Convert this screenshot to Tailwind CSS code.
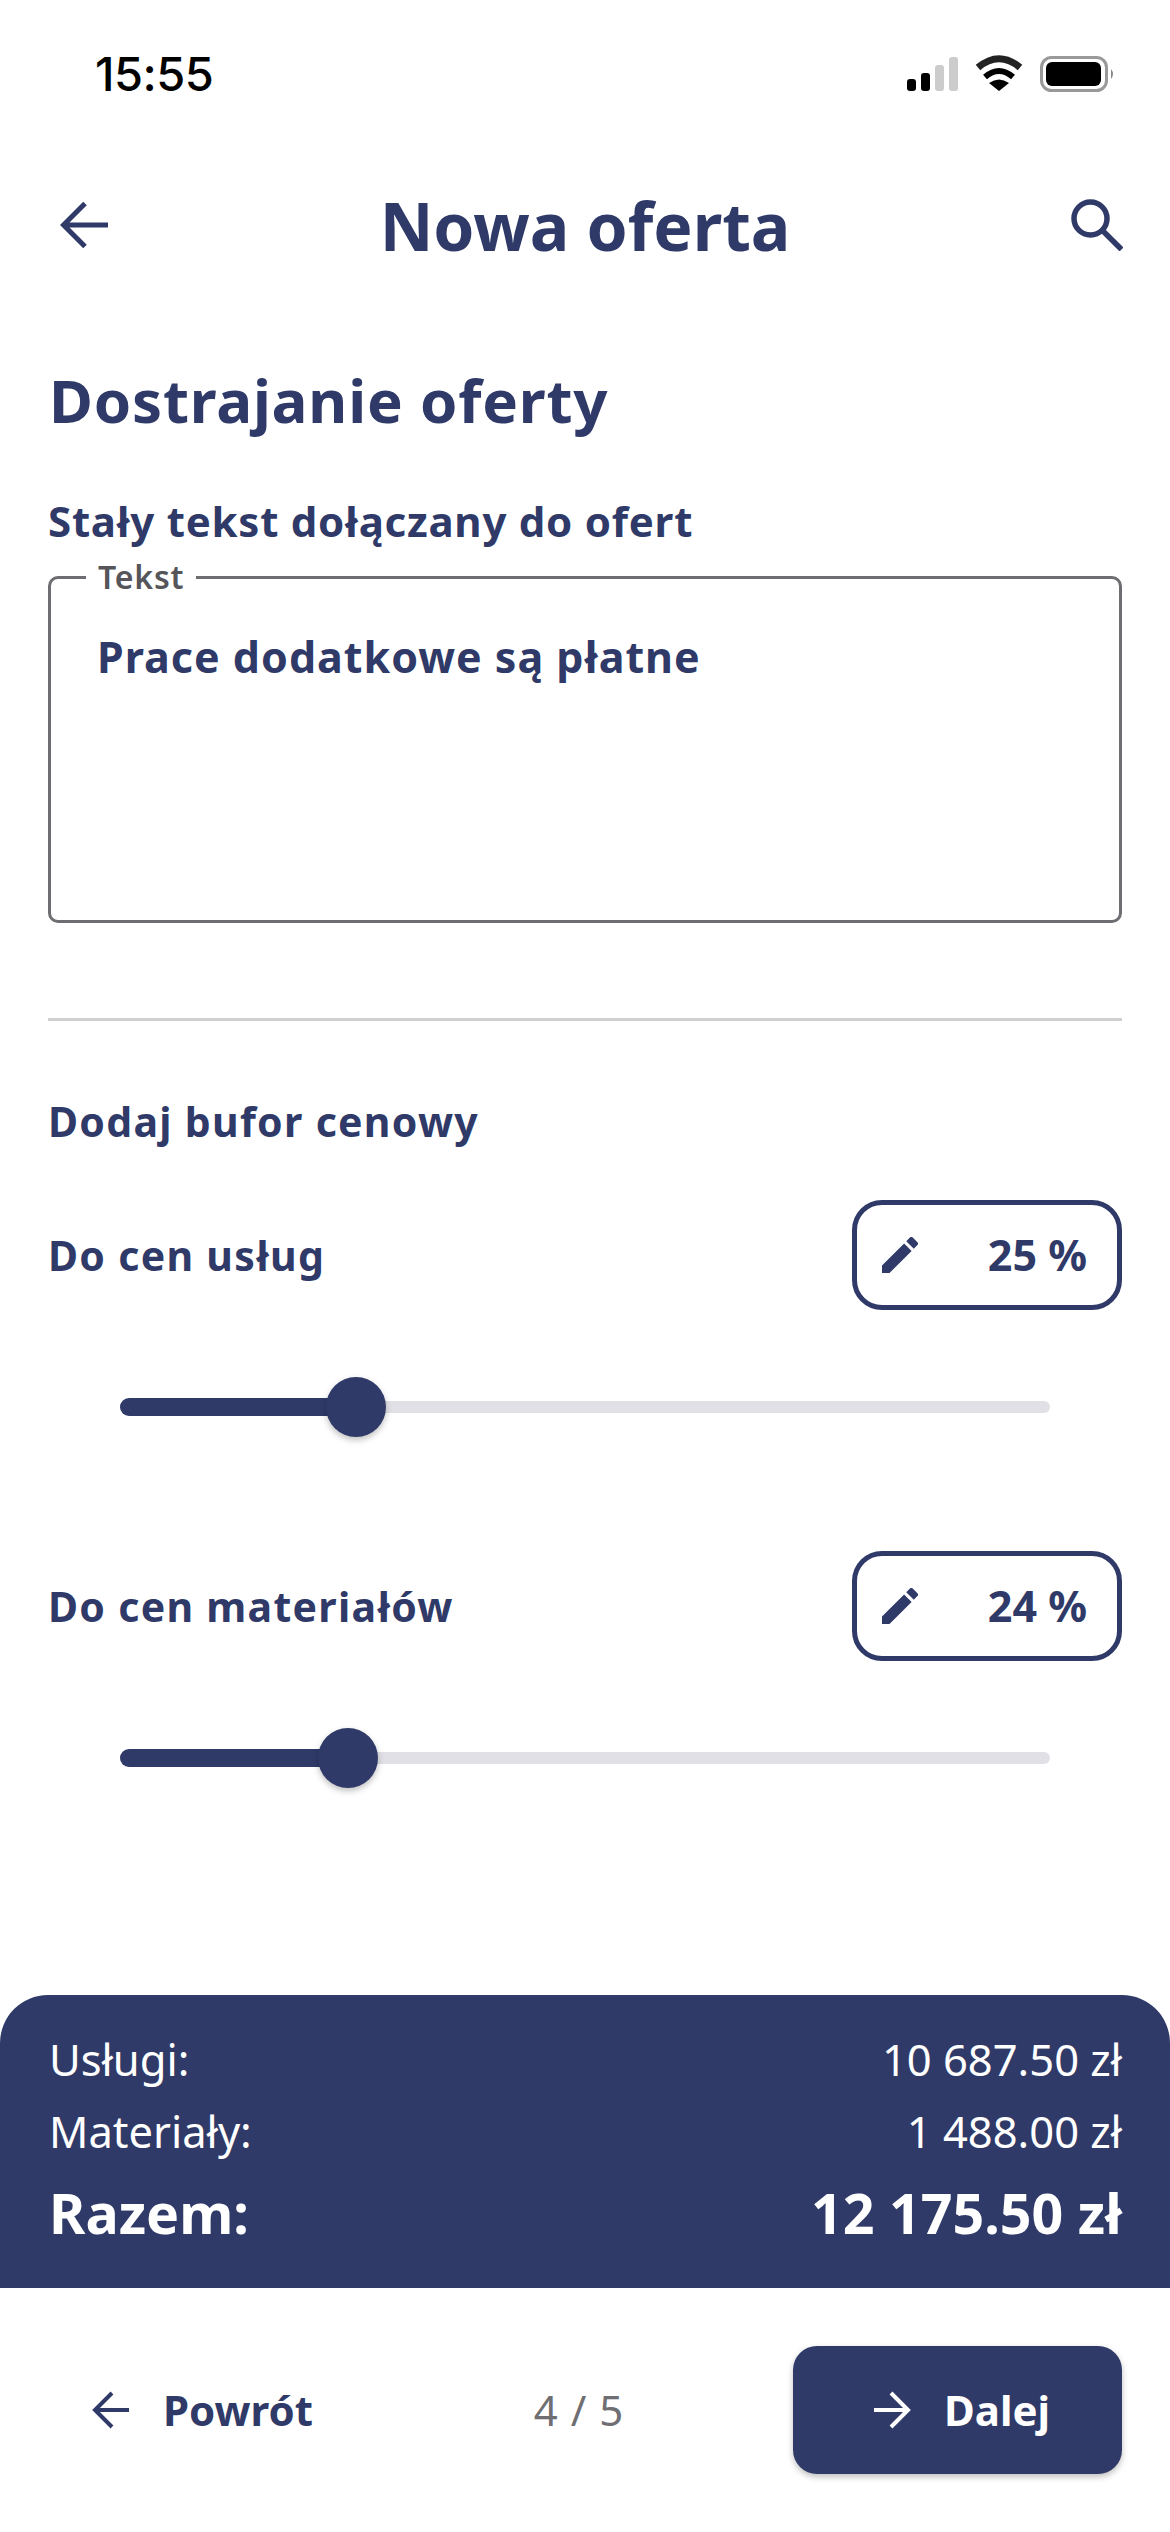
<!DOCTYPE html>
<html lang="pl">
<head>
<meta charset="utf-8">
<script src="https://cdn.jsdelivr.net/npm/@tailwindcss/browser@4"></script>
</head>
<body class="bg-white">
<div class="w-[1170px] h-[2532px] flex flex-col overflow-hidden bg-white text-[#2f3a68] font-['Noto_Sans',sans-serif]">
  <div class="h-[150px] shrink-0 flex items-start justify-between pl-[95px] pr-[55px] pt-[46px]">
    <span class="font-['Inter',sans-serif] font-medium text-[47px] leading-[56px] text-black tracking-[-0.5px]">15:55</span>
    <svg class="mt-[9px]" width="208" height="38" viewBox="0 0 208 38">
      <rect x="0" y="24" width="9" height="12" rx="3" fill="#000"/>
      <rect x="14" y="18" width="9" height="18" rx="3" fill="#000"/>
      <rect x="28" y="10" width="9" height="26" rx="3" fill="#ccc"/>
      <rect x="42" y="2" width="9" height="34" rx="3" fill="#ccc"/>
      <path d="M71 12.500 Q92 -5 113 12.500" fill="none" stroke="#222" stroke-width="7"/>
      <path d="M78 22 Q92 10 106 22" fill="none" stroke="#000" stroke-width="6"/>
      <path d="M92 36 L82 28 Q92 21 102 28 Z" fill="#000"/>
      <rect x="134.500" y="2.500" width="65" height="33" rx="10" fill="none" stroke="#999" stroke-width="3"/>
      <rect x="139" y="7" width="55" height="24" rx="6" fill="#000"/>
      <path d="M204 14 Q208 19 204 24 Z" fill="#888"/>
    </svg>
  </div>

  <header class="h-[150px] shrink-0 flex items-center justify-between pl-[60px] pr-[47px]">
    <svg width="48" height="46" viewBox="0 0 48 46" fill="none" stroke="#2f3a68" stroke-width="5"><path d="M48 23H4M25 1.500L3.500 23 25 44.500"/></svg>
    <h1 class="font-bold text-[66px] leading-[90px] mr-[9px]">Nowa oferta</h1>
    <svg width="52" height="52" viewBox="0 0 52 52" fill="none" stroke="#2f3a68" stroke-width="5.500"><circle cx="19.500" cy="19.500" r="16.500"/><path d="M31 31l19.500 19.500"/></svg>
  </header>

  <main class="flex-1 px-[48px]">
    <h2 class="font-bold text-[60px] leading-[82px] tracking-[0.8px] mt-[59px] ml-[1px]">Dostrajanie oferty</h2>
    <p class="font-bold text-[42px] leading-[58px] tracking-[0.75px] mt-[51px]">Stały tekst dołączany do ofert</p>

    <div class="relative mt-[26px] h-[347px] rounded-[10px] border-[3px] border-[#6d6d72] px-[46px] pt-[49px]">
      <span class="absolute left-[35px] top-[-24px] bg-white px-[12px] text-[32px] leading-[44px] font-semibold text-[#55555a] tracking-[0.8px]">Tekst</span>
      <p class="font-bold text-[43px] leading-[58px] tracking-[1px]">Prace dodatkowe są płatne</p>
    </div>

    <div class="h-[3px] bg-[#cfcfd2] mt-[95px]"></div>

    <p class="font-bold text-[41px] leading-[56px] tracking-[1.3px] mt-[72px]">Dodaj bufor cenowy</p>

    <div class="mt-[51px] flex items-center justify-between">
      <span class="font-bold text-[41px] leading-[56px] tracking-[1.3px]">Do cen usług</span>
      <div class="w-[270px] h-[110px] rounded-[30px] border-[5px] border-[#2f3a68] flex items-center justify-between pl-[25px] pr-[30px]">
        <svg width="36" height="36" viewBox="3 3 18 18" fill="#2f3a68"><path d="M3 17.250V21h3.750L17.810 9.940l-3.750-3.750L3 17.250zM20.710 7.040a1 1 0 0 0 0-1.410l-2.340-2.340a1 1 0 0 0-1.410 0l-1.830 1.830 3.750 3.750 1.830-1.830z"/></svg>
        <span class="font-bold text-[43px] leading-[58px]">25 %</span>
      </div>
    </div>
    <div class="mt-[67px] mx-[72px] h-[60px] flex items-center">
      <div class="relative w-full h-[12px] rounded-full bg-[#e0e0e6]">
        <div class="absolute left-0 top-[-3px] h-[18px] w-[235px] rounded-full bg-[#2f3a68]"></div>
        <div class="absolute left-[206px] top-[-24px] size-[60px] rounded-full bg-[#2f3a68] shadow-[0_3px_6px_rgba(0,0,0,0.25)]"></div>
      </div>
    </div>

    <div class="mt-[114px] flex items-center justify-between">
      <span class="font-bold text-[41px] leading-[56px] tracking-[1.3px]">Do cen materiałów</span>
      <div class="w-[270px] h-[110px] rounded-[30px] border-[5px] border-[#2f3a68] flex items-center justify-between pl-[25px] pr-[30px]">
        <svg width="36" height="36" viewBox="3 3 18 18" fill="#2f3a68"><path d="M3 17.250V21h3.750L17.810 9.940l-3.750-3.750L3 17.250zM20.710 7.040a1 1 0 0 0 0-1.410l-2.340-2.340a1 1 0 0 0-1.410 0l-1.830 1.830 3.750 3.750 1.830-1.830z"/></svg>
        <span class="font-bold text-[43px] leading-[58px]">24 %</span>
      </div>
    </div>
    <div class="mt-[67px] mx-[72px] h-[60px] flex items-center">
      <div class="relative w-full h-[12px] rounded-full bg-[#e0e0e6]">
        <div class="absolute left-0 top-[-3px] h-[18px] w-[226px] rounded-full bg-[#2f3a68]"></div>
        <div class="absolute left-[198px] top-[-24px] size-[60px] rounded-full bg-[#2f3a68] shadow-[0_3px_6px_rgba(0,0,0,0.25)]"></div>
      </div>
    </div>
  </main>

  <section class="h-[293px] shrink-0 rounded-t-[48px] bg-[#2f3a68] text-white px-[48px] pt-[34px]">
    <div class="flex justify-between text-[43.500px] leading-[60px] font-normal"><span class="ml-[1px]">Usługi:</span><span>10 687.50 zł</span></div>
    <div class="flex justify-between text-[43.500px] leading-[60px] font-normal mt-[12px]"><span class="ml-[1px]">Materiały:</span><span>1 488.00 zł</span></div>
    <div class="flex justify-between text-[55.500px] leading-[74px] font-bold mt-[15px]"><span class="ml-[1px]">Razem:</span><span>12 175.50 zł</span></div>
  </section>

  <footer class="h-[244px] shrink-0 flex items-start justify-between pl-[92px] pr-[48px] pt-[58px]">
    <div class="h-[128px] flex items-center">
      <svg width="38" height="38" viewBox="0 0 38 38" fill="none" stroke="#2f3a68" stroke-width="4"><path d="M37 19H3M20 2L3 19l17 17"/></svg>
      <span class="font-bold text-[42px] leading-[58px] ml-[33px]">Powrót</span>
      <span class="font-normal text-[42px] leading-[58px] text-[#6f6f73] ml-[221px] tracking-[1px]">4 / 5</span>
    </div>
    <div class="w-[329px] h-[128px] rounded-[24px] bg-[#2f3a68] text-white flex items-center justify-center gap-[33px] pl-[8px] shadow-[0_3px_6px_rgba(0,0,0,0.25)]">
      <svg width="38" height="38" viewBox="0 0 38 38" fill="none" stroke="#fff" stroke-width="4"><path d="M1 19h34M18 2l17 17-17 17"/></svg>
      <span class="font-bold text-[42px] leading-[58px]">Dalej</span>
    </div>
  </footer>
</div>
</body>
</html>
